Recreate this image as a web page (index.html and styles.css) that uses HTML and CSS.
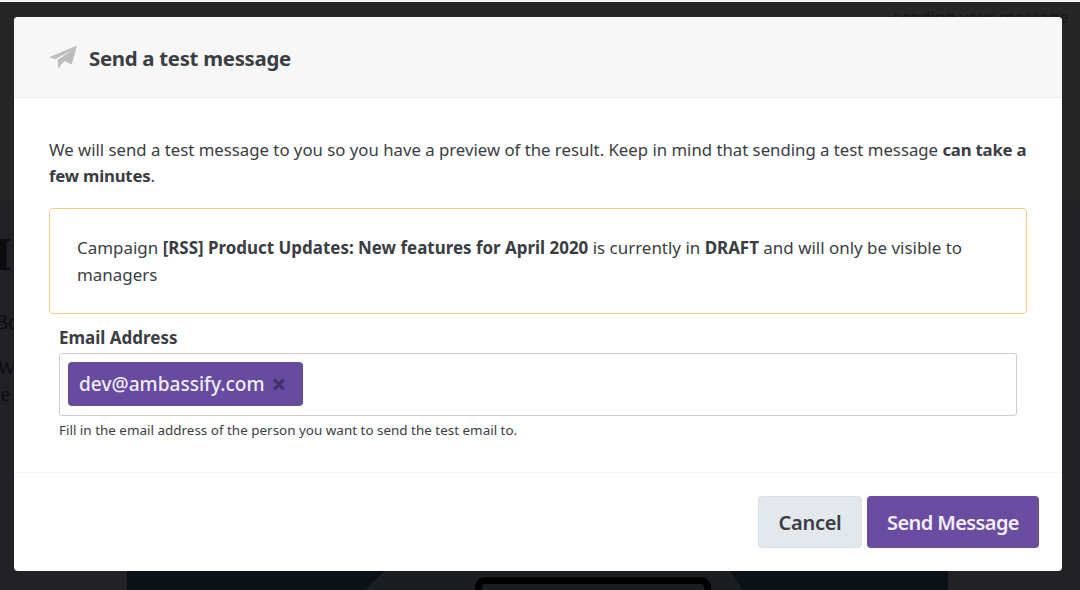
FILE: index.html
```html
<!DOCTYPE html>
<html lang="en">
<head>
<meta charset="utf-8">
<title>Send a test message</title>
<link rel="stylesheet" href="styles.css">
</head>
<body>
<div class="backdrop">
  <div class="bg-top"></div>
  <span class="bg-status">sending your message</span>
  <span class="bg-glyph bg-heading">I</span>
  <span class="bg-glyph bg-b">Bo</span>
  <span class="bg-glyph bg-w">W</span>
  <span class="bg-glyph bg-d">de</span>
  <div class="bg-hero"></div>
  <div class="bg-screen"></div>
  <div class="bg-device"></div>
</div>
<main class="modal">
  <header class="modal-head">
    <svg class="plane" viewBox="0 0 28 24" aria-hidden="true"><path d="M0 12.2 28 .5 22.9 19.6 15.2 16 9.4 23.6 8.6 14.9 22.5 5.2 6.2 14.2Z"/></svg>
    <h1>Send a test message</h1>
  </header>
  <section class="modal-body">
    <p class="intro">We will send a test message to you so you have a preview of the result. Keep in mind that sending a test message <b>can take a few minutes</b>.</p>
    <div class="notice">Campaign <b>[RSS] Product Updates: New features for April 2020</b> is currently in <b>DRAFT</b> and will only be visible to managers</div>
    <div class="field">
      <label class="field-label">Email Address</label>
      <div class="tag-input"><span class="tag">dev@ambassify.com<span class="tag-x">×</span></span></div>
      <p class="hint">Fill in the email address of the person you want to send the test email to.</p>
    </div>
  </section>
  <footer class="modal-foot">
    <button class="btn btn-cancel">Cancel</button>
    <button class="btn btn-send">Send Message</button>
  </footer>
</main>
</body>
</html>
```
FILE: styles.css
```css
* { box-sizing: border-box; }
html, body { margin: 0; height: 590px; overflow: hidden; }
body { background: #212126; font-family: "Noto Sans", sans-serif; color: #3a3d42; padding: 17px 18px 0 14px; position: relative; }
.backdrop { position: absolute; inset: 0; overflow: hidden; }
.bg-top { position: absolute; left: 0; right: 0; top: 2px; height: 198px; background: #262626; }
.backdrop::before { content: ""; position: absolute; left: 0; right: 0; top: 0; height: 2px; background: #f4f4f4; }
.bg-status { position: absolute; left: 893px; top: 5px; font-size: 16.5px; color: #161616; white-space: nowrap; }
.bg-glyph { position: absolute; left: 0; font-family: "Liberation Serif", serif; color: #0c0c0e; line-height: 1; }
.bg-heading { top: 232px; font-size: 46px; font-weight: 700; left: -6px; }
.bg-b { top: 312px; font-size: 20px; left: -5px; }
.bg-w { top: 358px; font-size: 20px; left: -3px; }
.bg-d { top: 384px; font-size: 20px; left: -9px; }
.bg-hero { position: absolute; left: 127px; top: 571px; width: 821px; height: 19px; background: #0c1118; }
.bg-screen { position: absolute; left: 365px; top: 571px; width: 378px; height: 19px; background: #1a1e21; clip-path: polygon(20px 0, 365px 0, 378px 100%, 0 100%); }
.bg-device { position: absolute; left: 475px; top: 577px; width: 236px; height: 30px; background: #1b1e21; border: 7px solid #000; border-radius: 10px; }

.modal { position: relative; width: 1048px; height: 554px; background: #fff; border-radius: 4px; display: flex; flex-direction: column; overflow: hidden; }
.modal-head { height: 81px; flex: none; background: #f7f7f7; border-bottom: 1px solid #eceeef; display: flex; align-items: center; gap: 12px; padding: 0 35px; }
.plane { width: 28px; height: 24px; fill: #bdbdbd; flex: none; }
h1 { margin: 2px 0 0; font-size: 20.4px; font-weight: 700; letter-spacing: -.3px; color: #3a3d42; }
.modal-body { flex: 1; padding: 39px 35px 0; }
.intro { margin: 0 0 19px; font-size: 16.75px; line-height: 26px; }
.intro b { font-weight: 700; letter-spacing: -.2px; }
.notice b { font-weight: 700; }
.notice { height: 106px; border: 1px solid #f5cf85; border-radius: 4px; padding: 26px 27px; font-size: 16.95px; line-height: 26.5px; }
.field { padding: 12px 10px 0; }
.field-label { display: block; font-size: 17px; font-weight: 700; line-height: 24px; }
.tag-input { height: 63px; margin-top: 3px; border: 1px solid #ccc; border-radius: 3px; padding: 8px; background: #fff; }
.tag { display: inline-flex; align-items: center; height: 44px; padding: 0 17px 0 11px; background: #674ba0; color: #f1edf8; border-radius: 4px; font-size: 19.1px; font-weight: 500; }
.tag-x { color: #3f3163; font-size: 26px; font-weight: 700; margin-left: 7px; line-height: 1; }
.hint { margin: 5px 0 0; font-size: 13.45px; line-height: 18px; }
.modal-foot { height: 99px; flex: none; border-top: 1px solid #f7f7f7; display: flex; justify-content: flex-end; align-items: flex-start; gap: 5px; padding: 23px 23px 0 0; }
.btn { height: 52px; border-radius: 4px; font-family: inherit; font-size: 20px; font-weight: 600; border: 1px solid transparent; padding: 0; }
.btn-cancel { width: 104px; background: #e3e8ec; border-color: #d8e1e6; color: #3a3d42; letter-spacing: -.3px; }
.btn-send { width: 172px; background: #6a4ca0; color: #f3eff9; letter-spacing: -.6px; }
```
